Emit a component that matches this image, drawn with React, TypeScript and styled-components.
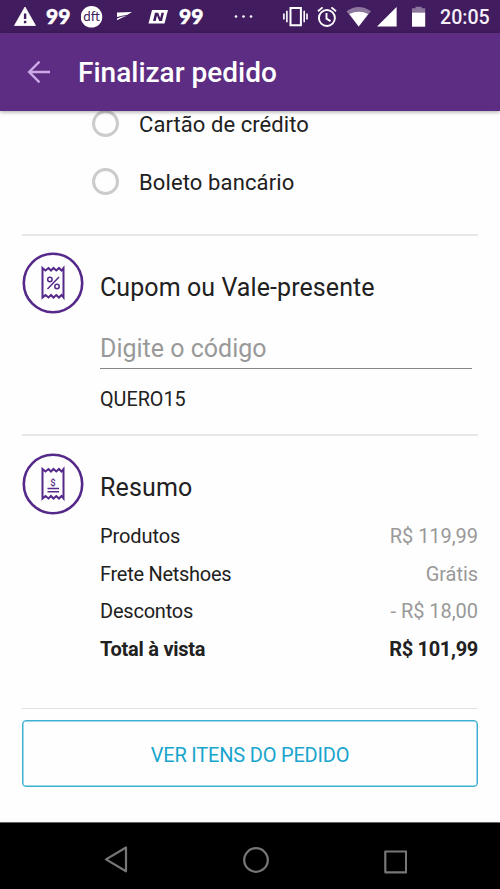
import React from "react";
import styled, { createGlobalStyle } from "styled-components";

const GlobalStyle = createGlobalStyle`
  * { box-sizing: border-box; }
  body { margin: 0; background: #fefefe; font-family: Roboto, "Liberation Sans", sans-serif; }
`;

const Screen = styled.div`
  width: 500px;
  height: 889px;
  display: flex;
  flex-direction: column;
  overflow: hidden;
  background: #fefefe;
  color: #212121;
`;

const StatusBar = styled.header`
  flex: none;
  height: 33px;
  display: flex;
  align-items: flex-start;
  background: #411c5e;
`;

const StatusIcon = styled.svg<{ $gap: number }>`
  flex: none;
  display: block;
  height: 33px;
  margin-left: ${(p) => p.$gap}px;
  fill: #fff;
`;

const Clock = styled.span`
  margin-left: 14px;
  font-size: 19.6px;
  font-weight: 500;
  line-height: 35px;
  color: #f6effa;
`;

const AppBar = styled.div`
  flex: none;
  position: relative;
  z-index: 1;
  height: 78px;
  display: flex;
  align-items: center;
  padding-left: 27px;
  background: #5c2d82;
  box-shadow: 0 1px 4px rgba(0, 0, 0, 0.35);
`;

const BackIcon = styled.svg`
  flex: none;
  margin: 0 27px 0 0;
`;

const Title = styled.h1`
  margin: 2px 0 0;
  font-size: 28px;
  font-weight: 500;
  line-height: 34px;
  color: #fff;
  white-space: nowrap;
`;

const Content = styled.main`
  flex: 1;
  min-height: 0;
  padding: 0 22px;
  overflow: hidden;
`;

const PaymentList = styled.div`
  height: 125px;
  padding-left: 70px;
  margin-top: -2px;
`;

const PaymentOption = styled.label`
  display: flex;
  align-items: center;
  height: 28px;
  margin-bottom: 30px;
`;

const Radio = styled.span`
  flex: none;
  width: 27px;
  height: 27px;
  margin-right: 20px;
  border: 3px solid #cbcbcb;
  border-radius: 50%;
`;

const OptionLabel = styled.span<{ $spacing: number }>`
  padding-top: 2px;
  font-size: 22px;
  letter-spacing: ${(p) => p.$spacing}px;
  white-space: nowrap;
`;

const Section = styled.section<{ $height: number; $iconDrop?: number }>`
  display: grid;
  grid-template-columns: 62px 1fr;
  column-gap: 16px;
  align-items: start;
  height: ${(p) => p.$height}px;
  padding-top: 16px;
  border-top: 2px solid #e7e7e7;
  > svg { margin-top: ${(p) => p.$iconDrop ?? 0}px; }
`;

const SectionIcon = styled.svg`
  display: block;
  fill: none;
  stroke: #55298a;
`;

const SectionTitle = styled.h2<{ $spacing: number }>`
  margin: 20px 0 0;
  font-size: 25px;
  font-weight: 400;
  line-height: 32px;
  letter-spacing: ${(p) => p.$spacing}px;
`;

const CodeField = styled.div`
  width: 372px;
  height: 65px;
  padding-top: 29px;
  border-bottom: 1px solid #858585;
  font-size: 25px;
  line-height: 32px;
  color: #999;
`;

const Coupon = styled.div`
  margin-top: 19px;
  font-size: 19.8px;
  line-height: 24px;
`;

const Summary = styled.dl`
  margin: 14px 0 0;
`;

const SummaryRow = styled.div<{ $total?: boolean }>`
  display: flex;
  justify-content: space-between;
  height: 37.5px;
  font-size: 20px;
  line-height: 37.5px;
  font-weight: ${(p) => (p.$total ? 700 : 400)};
`;

const Term = styled.dt<{ $spacing: number }>`
  letter-spacing: ${(p) => p.$spacing}px;
`;

const Amount = styled.dd<{ $total?: boolean }>`
  margin: 0;
  letter-spacing: ${(p) => (p.$total ? -0.3 : -0.05)}px;
  color: ${(p) => (p.$total ? "#212121" : "#999")};
`;

const Footer = styled.div`
  padding-top: 11px;
  border-top: 1px solid #e2e2e2;
`;

const OrderButton = styled.button`
  width: 100%;
  height: 67px;
  padding: 3px 0 0;
  border: 1.5px solid #3fb0d0;
  box-shadow: inset 0 0 0 0.5px #3fb0d0;
  border-radius: 4px;
  background: transparent;
  font: 400 20px Roboto, sans-serif;
  letter-spacing: -0.2px;
  color: #18a5cc;
`;

const NavBar = styled.nav`
  flex: none;
  height: 67px;
  display: grid;
  grid-template-columns: 139px 140px 1fr;
  align-content: center;
  padding: 7px 0 0 104px;
  background: #000;
  border-top: 1px solid #666;
`;

const NavIcon = styled.svg`
  display: block;
  fill: none;
  stroke: #777;
  stroke-width: 2.2;
  stroke-linejoin: round;
`;

const receipt =
  "M20.5 16 L23.5 18.5 L26.5 16 L29 18.5 L31.5 16 L34.3 18.5 L37 16 L39.5 18.5 L41.5 16 V45.5 L39.5 43 L37 45.5 L34.3 43 L31.5 45.5 L29 43 L26.5 45.5 L23.5 43 L20.5 45.5 Z";

const NinetyNine = ({ gap }: { gap: number }) => (
  <StatusIcon $gap={gap} width="26" viewBox="0 0 26 33">
    <text x="0" y="24.3" fontFamily="Lato" fontWeight="900" fontSize="21" textLength="24.5" stroke="#fff" strokeWidth="0.5">99</text>
  </StatusIcon>
);

const rows = [
  { term: "Produtos", amount: "R$ 119,99", spacing: -0.1 },
  { term: "Frete Netshoes", amount: "Grátis", spacing: -0.28 },
  { term: "Descontos", amount: "- R$ 18,00", spacing: -0.22 },
  { term: "Total à vista", amount: "R$ 101,99", spacing: -0.25, total: true },
];

export default function App() {
  return (
    <>
      <GlobalStyle />
      <Screen>
        <StatusBar>
          <StatusIcon $gap={14} width="22" viewBox="0 0 22 33">
            <path d="M11 7 L21.5 25.5 H0.5 Z" stroke="#fff" strokeLinejoin="round" strokeWidth="0.8" />
            <path d="M9.9 13.5h2.4v5.5H9.9z M9.9 20.8h2.4v2.4H9.9z" fill="#411c5e" />
          </StatusIcon>
          <NinetyNine gap={10} />
          <StatusIcon $gap={9} width="22" viewBox="0 0 22 33">
            <circle cx="10.5" cy="16.8" r="10.8" />
            <text x="2.3" y="21" fontFamily="Lato" fontSize="13" textLength="16.5" lengthAdjust="spacingAndGlyphs" fill="#411c5e">dft</text>
          </StatusIcon>
          <StatusIcon $gap={13} width="17" viewBox="0 0 17 33">
            <path d="M1 12.5 L16 12 L11 15 Q6 15.3 1 17 Z M1 20.3 V18.6 Q5 16 10.5 15.9 Q6 17.4 1 20.3Z" />
          </StatusIcon>
          <StatusIcon $gap={15} width="21" viewBox="0 0 21 33">
            <path d="M4 10 H20 L16.5 23.5 H0.5 Z" />
            <path d="M5 21 L7 12.7 H10.2 L12.2 18 L13.5 12.7 H16 L14 21 H11.2 L9 15.5 L7.7 21Z" fill="#411c5e" />
          </StatusIcon>
          <NinetyNine gap={10} />
          <StatusIcon $gap={29} width="20" viewBox="0 0 20 33">
            <circle cx="2" cy="16.5" r="1.3" />
            <circle cx="9.5" cy="16.5" r="1.3" />
            <circle cx="17" cy="16.5" r="1.3" />
          </StatusIcon>
          <StatusIcon $gap={28} width="26" viewBox="0 0 26 33">
            <path d="M8.5 8h10.4v17.3H8.5z" fill="none" stroke="#fff" strokeWidth="2" />
            <path d="M1.9 13.5v6M4.9 10.8v11.5M22.2 10.8v11.5M25 13.5v6" stroke="#fff" strokeWidth="1.6" />
          </StatusIcon>
          <StatusIcon $gap={9} width="20" viewBox="0 0 20 33">
            <g fill="none" stroke="#fff" strokeWidth="1.9">
              <circle cx="9.9" cy="18" r="8" />
              <path d="M9.5 13v5.6l4 2.5M1 11.3l4.6-3.9M19 11.3l-4.6-3.9" />
            </g>
          </StatusIcon>
          <StatusIcon $gap={9} width="25" viewBox="0 0 25 33">
            <path d="M0.5 11.3 Q12.7 2.8 25 11.3 L12.7 26.5Z" opacity="0.4" />
            <path d="M3.3 14 Q12.7 9.5 22.2 14 L12.7 26.5Z" />
          </StatusIcon>
          <StatusIcon $gap={6} width="20" viewBox="0 0 20 33">
            <path d="M19.6 7v19.5H0Z" />
          </StatusIcon>
          <StatusIcon $gap={15} width="14" viewBox="0 0 14 33">
            <path d="M0 12.5V8.3h3.5V6.7h6.2v1.6h3.5v4.2z" opacity="0.4" />
            <path d="M0 12.5h13.2v14.2H0z" />
          </StatusIcon>
          <Clock>20:05</Clock>
        </StatusBar>

        <AppBar>
          <BackIcon width="24" height="24" viewBox="0 0 24 24" fill="none" stroke="#cda9e8" strokeWidth="2.4">
            <path d="M23 12H2.5M12.5 1.7 2.2 12l10.3 10.3" />
          </BackIcon>
          <Title>Finalizar pedido</Title>
        </AppBar>

        <Content>
          <PaymentList>
            <PaymentOption>
              <Radio />
              <OptionLabel $spacing={0.07}>Cartão de crédito</OptionLabel>
            </PaymentOption>
            <PaymentOption>
              <Radio />
              <OptionLabel $spacing={0.12}>Boleto bancário</OptionLabel>
            </PaymentOption>
          </PaymentList>

          <Section $height={200}>
            <SectionIcon width="62" height="62" viewBox="0 0 62 62">
              <circle cx="31" cy="31" r="29.2" strokeWidth="2.6" />
              <path d={receipt} strokeWidth="2" />
              <path d="M37 25 25.5 37" strokeWidth="1.5" />
              <circle cx="27.9" cy="27.5" r="2.2" strokeWidth="1.5" />
              <circle cx="35" cy="34.5" r="2.2" strokeWidth="1.5" />
            </SectionIcon>
            <div>
              <SectionTitle $spacing={0.08}>Cupom ou Vale-presente</SectionTitle>
              <CodeField>Digite o código</CodeField>
              <Coupon>QUERO15</Coupon>
            </div>
          </Section>

          <Section $height={274} $iconDrop={1}>
            <SectionIcon width="62" height="62" viewBox="0 0 62 62">
              <circle cx="31" cy="31" r="29.2" strokeWidth="2.6" />
              <path d={receipt} strokeWidth="2" />
              <text x="31" y="32.5" fontSize="9.5" fontWeight="500" textAnchor="middle" fill="#55298a" stroke="none">$</text>
              <path d="M25.5 35.5h11.5M25.5 38.7h11.5" strokeWidth="1.4" />
            </SectionIcon>
            <div>
              <SectionTitle $spacing={0.15}>Resumo</SectionTitle>
              <Summary>
                {rows.map((r) => (
                  <SummaryRow key={r.term} $total={r.total}>
                    <Term $spacing={r.spacing}>{r.term}</Term>
                    <Amount $total={r.total}>{r.amount}</Amount>
                  </SummaryRow>
                ))}
              </Summary>
            </div>
          </Section>

          <Footer>
            <OrderButton>VER ITENS DO PEDIDO</OrderButton>
          </Footer>
        </Content>

        <NavBar>
          <NavIcon width="25" height="28" viewBox="0 0 25 28">
            <path d="M22 1.5V25.3L2 13.4Z" />
          </NavIcon>
          <NavIcon width="28" height="28" viewBox="0 0 28 28">
            <circle cx="13" cy="14" r="11.8" />
          </NavIcon>
          <NavIcon width="24" height="28" viewBox="0 0 24 28">
            <path d="M2.3 5.5h20.8v20.8H2.3z" />
          </NavIcon>
        </NavBar>
      </Screen>
    </>
  );
}
